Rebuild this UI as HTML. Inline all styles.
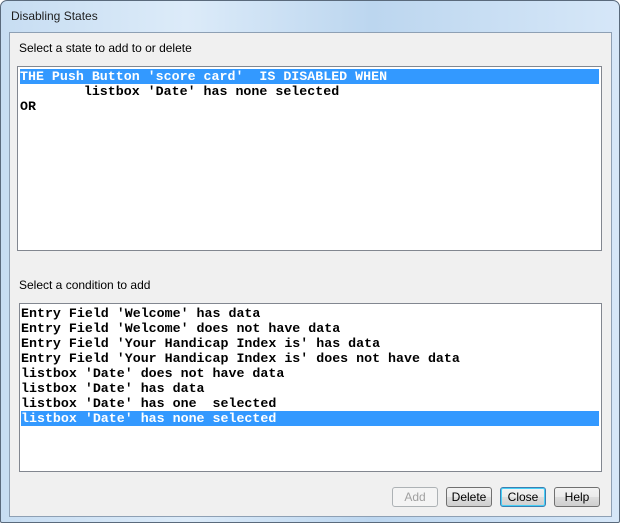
<!DOCTYPE html>
<html><head><style>
body{margin:0;width:620px;height:525px;background:#fff;position:relative;overflow:hidden;font-family:"Liberation Sans",sans-serif}
.frame{position:absolute;left:0;top:0;width:618px;height:521px;border:1px solid #5a6a7c;border-radius:7px 7px 2px 2px;background:linear-gradient(90deg,#c7ddf2,#dcebf9 30%,#bcd6ef 60%,#d6e7f8);}
.title{position:absolute;left:11px;top:9px;font-size:12px;color:#1e1e1e}
.panel{position:absolute;left:9px;top:32px;width:601px;height:483px;background:#f0f0f0;border:1px solid #8ea0b4}
.lbl{position:absolute;font-size:12px;color:#000}
.lb{position:absolute;background:#fff;border:1px solid #828790}
.row{position:absolute;left:2px;height:15px;line-height:15px;font-family:"Liberation Mono",monospace;font-weight:bold;font-size:13.3px;white-space:pre;color:#000}
.lb2 .row{left:1px}
.sel{background:#3399ff;color:#fff}
.btn{position:absolute;top:487px;width:44px;height:18px;border:1px solid #707070;border-radius:3px;background:linear-gradient(#f2f2f2,#ebebeb 50%,#dddddd 51%,#cfcfcf);font-size:12px;text-align:center;line-height:18px;color:#000}
</style></head><body>
<div class="frame"></div>
<div class="title">Disabling States</div>
<div class="panel"></div>
<div class="lbl" style="left:19px;top:41px">Select a state to add to or delete</div>
<div class="lb" style="left:17px;top:66px;width:583px;height:183px">
<div class="row sel" style="top:2px;width:579px">THE Push Button 'score card'  IS DISABLED WHEN</div>
<div class="row" style="top:17px">        listbox 'Date' has none selected</div>
<div class="row" style="top:32px">OR</div>
</div>
<div class="lbl" style="left:19px;top:278px">Select a condition to add</div>
<div class="lb lb2" style="left:19px;top:303px;width:581px;height:167px">
<div class="row" style="top:2px">Entry Field 'Welcome' has data</div>
<div class="row" style="top:17px">Entry Field 'Welcome' does not have data</div>
<div class="row" style="top:32px">Entry Field 'Your Handicap Index is' has data</div>
<div class="row" style="top:47px">Entry Field 'Your Handicap Index is' does not have data</div>
<div class="row" style="top:62px">listbox 'Date' does not have data</div>
<div class="row" style="top:77px">listbox 'Date' has data</div>
<div class="row" style="top:92px">listbox 'Date' has one  selected</div>
<div class="row sel" style="top:107px;width:578px">listbox 'Date' has none selected</div>
</div>
<div class="btn" style="left:392px;border-color:#adb2b5;background:#f4f4f4;color:#a0a0a0">Add</div>
<div class="btn" style="left:446px">Delete</div>
<div class="btn" style="left:500px;border-color:#3c7fb1;box-shadow:inset 0 0 0 1px #48d0f7">Close</div>
<div class="btn" style="left:554px">Help</div>
</body></html>
